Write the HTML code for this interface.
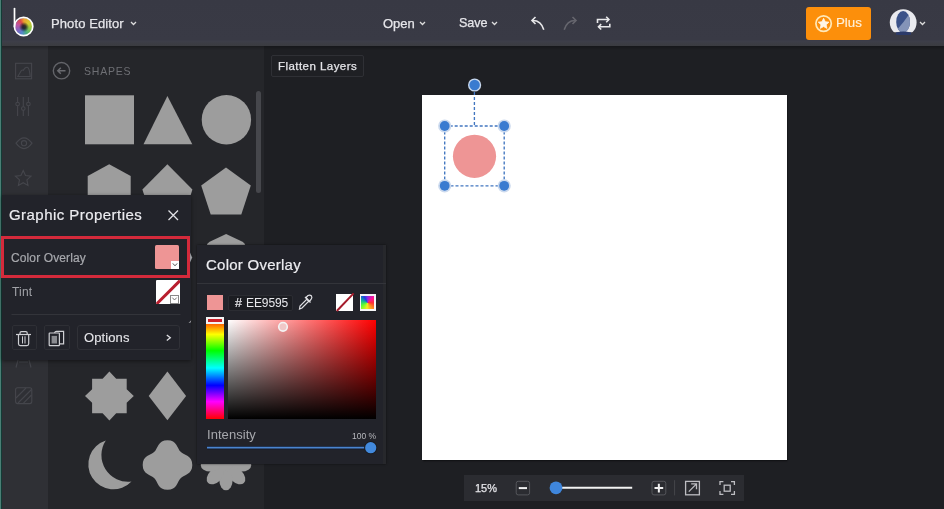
<!DOCTYPE html>
<html><head><meta charset="utf-8">
<style>
*{margin:0;padding:0;box-sizing:border-box}
html,body{width:944px;height:509px;overflow:hidden;background:#1e1f23;font-family:"Liberation Sans",sans-serif;position:relative}
.a{position:absolute}
svg{position:absolute;overflow:visible}
.t{position:absolute;white-space:nowrap;line-height:1;will-change:transform}
</style></head><body>
<!-- canvas area bg -->
<div class="a" style="left:264px;top:46px;width:680px;height:463px;background:#1e1f23"></div>
<!-- panel -->
<div class="a" style="left:47px;top:46px;width:217px;height:463px;background:#25262a"></div>
<!-- icon column -->
<div class="a" style="left:2px;top:46px;width:45.5px;height:463px;background:#2f3035"></div>
<!-- scrollbar -->
<div class="a" style="left:256px;top:91px;width:5px;height:102px;border-radius:3px;background:#46474c"></div>
<!-- sidebar header -->
<svg style="left:0;top:0" width="270" height="509">
  <g fill="none" stroke="#45464c" stroke-width="1.1">
    <rect x="15.6" y="63.3" width="16" height="15.5"/>
    <path d="M17.8 76.5 L21.2 70.8 Q22.3 69.5 23.3 70.3 Q25 67 27.3 67.2 Q29.5 67.8 30.2 76.5 Z"/>
    <path d="M17.6 97 V116 M23.3 97 V116 M28.4 97 V116"/>
    <circle cx="17.6" cy="104" r="1.8" fill="#2f3035"/>
    <circle cx="23.3" cy="108.6" r="1.8" fill="#2f3035"/>
    <circle cx="28.4" cy="104" r="1.8" fill="#2f3035"/>
    <path d="M16 143.2 Q24 132.5 32 143.2 Q24 154 16 143.2 Z"/>
    <circle cx="24" cy="143.2" r="2.6"/>
    <path d="M23.2 170.5 L25.5 175.6 L31 176.2 L26.9 179.9 L28 185.5 L23.2 182.7 L18.4 185.5 L19.5 179.9 L15.4 176.2 L20.9 175.6 Z"/>
    <path d="M16 367.5 L18 360 M31 367.5 L29 360 M19 362 H28"/>
    <rect x="15.6" y="387.8" width="16.2" height="15.8" rx="2"/>
    <path d="M16 398 L26 388 M18 403 L31.5 389.5 M23.5 403.2 L31.5 395"/>
  </g>
  <circle cx="61.5" cy="70.7" r="8.2" fill="none" stroke="#636469" stroke-width="1.4"/>
  <path d="M65.5 70.7 H57.8 M60.8 67.7 L57.8 70.7 L60.8 73.7" fill="none" stroke="#6a6b70" stroke-width="1.5"/>
  <g fill="#9d9d9d">
    <rect x="85" y="95.3" width="49" height="49"/>
    <path d="M167.4 96 L192.3 144.3 L143.5 144.3 Z"/>
    <circle cx="226.4" cy="119.7" r="24.7"/>
    <path d="M109.2 164.2 L130.7 176 V213 H87.7 V176 Z"/>
    <path d="M167.4 164.2 L192.4 189.4 L185 213 H150 L142.4 189.4 Z"/>
    <path d="M226 167.4 L250.8 185.4 L241.3 214.6 L210.7 214.6 L201.2 185.4 Z"/>
    <path d="M226.1 233.9 L242.5 241.8 Q245 243.2 245.5 246 L246 271 L226 284 L206 271 L206.5 246 Q207 243.2 209.7 241.8 Z"/>
    <path d="M109.4 371.6 L116.2 378.7 L126.7 378.7 L126.7 389.2 L133.8 396 L126.7 402.8 L126.7 413.3 L116.2 413.3 L109.4 420.4 L102.6 413.3 L92.1 413.3 L92.1 402.8 L85 396 L92.1 389.2 L92.1 378.7 L102.6 378.7 Z"/>
    <path d="M167.4 371.6 L186.1 396 L167.4 420.3 L148.7 396 Z"/>
    <path d="M105.8 440.5 A25 25 0 1 0 131.5 481.5 A26.6 26.6 0 0 1 105.8 440.5 Z"/>
    <path d="M167.50 440.20 C177.00 440.20 177.12 448.31 180.65 451.85 C184.19 455.38 192.30 455.50 192.30 465.00 C192.30 474.50 184.19 474.62 180.65 478.15 C177.12 481.69 177.00 489.80 167.50 489.80 C158.00 489.80 157.88 481.69 154.35 478.15 C150.81 474.62 142.70 474.50 142.70 465.00 C142.70 455.50 150.81 455.38 154.35 451.85 C157.88 448.31 158.00 440.20 167.50 440.20 Z"/>
    <circle cx="226" cy="465" r="16"/>
    <ellipse cx="241.50" cy="465.00" rx="9.8" ry="6.6" transform="rotate(0 241.50 465.00)"/>
    <ellipse cx="236.96" cy="475.96" rx="9.8" ry="6.6" transform="rotate(45 236.96 475.96)"/>
    <ellipse cx="226.00" cy="480.50" rx="9.8" ry="6.6" transform="rotate(90 226.00 480.50)"/>
    <ellipse cx="215.04" cy="475.96" rx="9.8" ry="6.6" transform="rotate(135 215.04 475.96)"/>
    <ellipse cx="210.50" cy="465.00" rx="9.8" ry="6.6" transform="rotate(180 210.50 465.00)"/>
    <ellipse cx="215.04" cy="454.04" rx="9.8" ry="6.6" transform="rotate(225 215.04 454.04)"/>
    <ellipse cx="226.00" cy="449.50" rx="9.8" ry="6.6" transform="rotate(270 226.00 449.50)"/>
    <ellipse cx="236.96" cy="454.04" rx="9.8" ry="6.6" transform="rotate(315 236.96 454.04)"/>
  </g>
</svg>
<div class="t" style="left:84.4px;top:65.5px;font-size:10.5px;color:#6e6f74;letter-spacing:0.8px">SHAPES</div>

<!-- Flatten layers -->
<div class="a" style="left:270.5px;top:54.5px;width:93.5px;height:22.5px;border:1px solid #2f3035;border-radius:2px;background:#1f2024"></div>
<div class="t" style="left:277.8px;top:61px;font-size:11.5px;color:#e4e4e8;letter-spacing:0.45px;-webkit-text-stroke:0.25px #e4e4e8">Flatten Layers</div>

<!-- canvas -->
<div class="a" style="left:422px;top:95px;width:365px;height:365px;background:#fff;box-shadow:0.5px 1px 1.5px rgba(0,0,0,0.6)"></div>
<svg style="left:0;top:0" width="944" height="509">
  <circle cx="474.5" cy="156.3" r="21.6" fill="#ee9595"/>
  <g fill="none" stroke="#4176c0" stroke-width="1.35" stroke-dasharray="3 2">
    <path d="M444.7 126 H504.2 V185.8 H444.7 Z"/>
    <path d="M474.4 92 V126"/>
  </g>
  <g fill="#3a7bd0">
    <circle cx="474.6" cy="85" r="6.6" fill="#c9d9ef"/>
    <circle cx="474.6" cy="85" r="5.2"/>
    <circle cx="444.7" cy="126" r="6.6" fill="#ccdaee"/>
    <circle cx="504.2" cy="126" r="6.6" fill="#ccdaee"/>
    <circle cx="444.7" cy="185.8" r="6.6" fill="#ccdaee"/>
    <circle cx="504.2" cy="185.8" r="6.6" fill="#ccdaee"/>
    <circle cx="444.7" cy="126" r="4.9"/>
    <circle cx="504.2" cy="126" r="4.9"/>
    <circle cx="444.7" cy="185.8" r="4.9"/>
    <circle cx="504.2" cy="185.8" r="4.9"/>
  </g>
</svg>

<!-- zoom bar -->
<div class="a" style="left:464px;top:475px;width:280px;height:26px;background:#2b2c31"></div>
<div class="t" style="left:474.5px;top:483px;font-size:11px;color:#e4e4e8;-webkit-text-stroke:0.25px #e4e4e8">15%</div>
<svg style="left:0;top:0" width="944" height="509">
  <rect x="516.2" y="481.3" width="13.4" height="13.6" rx="2" fill="none" stroke="#55565b" stroke-width="1"/>
  <path d="M518.8 488.1 H527" stroke="#f0f0f0" stroke-width="2"/>
  <path d="M556 487.8 H632.2" stroke="#f2f2f2" stroke-width="2"/>
  <circle cx="556" cy="487.8" r="6.4" fill="#3f86dc"/>
  <rect x="652" y="481.3" width="13.8" height="13.6" rx="2" fill="none" stroke="#55565b" stroke-width="1"/>
  <path d="M654.5 488.1 H663.2 M658.85 483.8 V492.4" stroke="#f0f0f0" stroke-width="2"/>
  <path d="M674.6 480.2 V495.4" stroke="#45464b" stroke-width="1"/>
  <rect x="685.6" y="481.4" width="13.8" height="13.4" fill="none" stroke="#bdbdc2" stroke-width="1.3"/>
  <path d="M688.8 491.6 L696.5 483.9 M691.2 483.9 H696.5 V489.2" fill="none" stroke="#bdbdc2" stroke-width="1.3"/>
  <path d="M720 485 V481.6 H723.4 M731 481.6 H734.4 V485 M734.4 491 V494.4 H731 M723.4 494.4 H720 V491" fill="none" stroke="#bdbdc2" stroke-width="1.3"/>
  <rect x="724.2" y="485.2" width="6" height="6" fill="none" stroke="#bdbdc2" stroke-width="1.3"/>
</svg>

<!-- header -->
<div class="a" style="left:0;top:46px;width:944px;height:4px;background:linear-gradient(to bottom,rgba(0,0,0,0.25),rgba(0,0,0,0))"></div>
<div class="a" style="left:0;top:0;width:944px;height:46px;background:linear-gradient(to bottom,#383944 0px,#393a45 40px,#3d3e49 41px,#3c3d45 43px,#3b3c40 46px)"></div>
<!-- teal strip -->
<div class="a" style="left:0;top:0;width:1px;height:509px;background:#4a7f75"></div>
<div class="a" style="left:1px;top:0;width:1px;height:509px;background:#123c36"></div>

<!-- logo -->
<div class="a" style="left:14.6px;top:17.5px;width:18px;height:18px;border-radius:50%;background:conic-gradient(from 0deg,#eca030,#d4cc30 50deg,#84c44c 110deg,#48ac84 160deg,#5484cc 200deg,#8464bc 245deg,#c054a0 290deg,#dc4848 330deg,#eca030)"></div>
<div class="a" style="left:14.6px;top:17.5px;width:18px;height:18px;border-radius:50%;background:radial-gradient(circle at 50% 50%,rgba(30,30,40,0.95) 0px,rgba(30,30,40,0.85) 1.8px,rgba(40,40,50,0) 5px)"></div>
<svg style="left:0;top:0" width="60" height="46">
  <path d="M14.5 8.5 V26.5" fill="none" stroke="#fff" stroke-width="1.7" stroke-linecap="round"/>
  <circle cx="23.6" cy="26.5" r="9.2" fill="none" stroke="#fff" stroke-width="1.7"/>
</svg>
<div class="t" style="left:50.5px;top:17px;font-size:13px;color:#e6e6ea;letter-spacing:0.1px;-webkit-text-stroke:0.25px #e6e6ea">Photo Editor</div>
<svg style="left:130px;top:20px" width="8" height="6"><path d="M1 2 L3.5 4.5 L6 2" fill="none" stroke="#ddd" stroke-width="1.3"/></svg>

<!-- Open / Save -->
<div class="t" style="left:383px;top:17px;font-size:13px;color:#e6e6ea;-webkit-text-stroke:0.25px #e6e6ea">Open</div>
<svg style="left:419px;top:20px" width="8" height="6"><path d="M1 2 L3.5 4.5 L6 2" fill="none" stroke="#ddd" stroke-width="1.3"/></svg>
<div class="t" style="left:459px;top:17px;font-size:12.6px;color:#e6e6ea;letter-spacing:-0.1px;-webkit-text-stroke:0.25px #e6e6ea;top:17.3px">Save</div>
<svg style="left:491px;top:20px" width="8" height="6"><path d="M1 2 L3.5 4.5 L6 2" fill="none" stroke="#ddd" stroke-width="1.3"/></svg>

<!-- undo redo swap -->
<svg style="left:528px;top:14px" width="20" height="20">
  <path d="M4 6.5 Q13 6 15.8 15.8" fill="none" stroke="#e8e8ea" stroke-width="1.6"/>
  <path d="M7.5 3 L4 6.5 L7.5 10" fill="none" stroke="#e8e8ea" stroke-width="1.6"/>
</svg>
<svg style="left:560px;top:14px" width="20" height="20">
  <path d="M16 6.5 Q7 6 4.2 15.8" fill="none" stroke="#66666e" stroke-width="1.6"/>
  <path d="M12.5 3 L16 6.5 L12.5 10" fill="none" stroke="#66666e" stroke-width="1.6"/>
</svg>
<svg style="left:594px;top:14px" width="20" height="20">
  <path d="M3.5 9 V5.5 H15" fill="none" stroke="#e8e8ea" stroke-width="1.6"/>
  <path d="M12.2 2.8 L14.9 5.5 L12.2 8.2" fill="none" stroke="#e8e8ea" stroke-width="1.6"/>
  <path d="M15.8 9.8 V12.8 H4.5" fill="none" stroke="#e8e8ea" stroke-width="1.6"/>
  <path d="M7.2 10.1 L4.5 12.8 L7.2 15.5" fill="none" stroke="#e8e8ea" stroke-width="1.6"/>
</svg>

<!-- Plus button -->
<div class="a" style="left:806px;top:6.5px;width:65px;height:33px;background:#fc8f0b;border-radius:3px"></div>
<svg style="left:815px;top:15px" width="18" height="18">
  <circle cx="8.6" cy="8.6" r="7.7" fill="none" stroke="#ffe8b8" stroke-width="1.7"/>
  <path d="M8.6 3.3 L10.25 6.75 L13.95 7.15 L11.2 9.7 L11.95 13.4 L8.6 11.55 L5.25 13.4 L6 9.7 L3.25 7.15 L6.95 6.75 Z" fill="#fff5e6" stroke="#fff5e6" stroke-width="0.8" stroke-linejoin="round"/>
</svg>
<div class="t" style="left:836px;top:15.5px;font-size:13.3px;color:#fff0d8;-webkit-text-stroke:0.15px #fff0d8">Plus</div>

<!-- avatar -->
<svg style="left:886px;top:6px" width="36" height="34">
  <defs><clipPath id="avc"><rect x="0" y="0" width="36" height="26.3"/></clipPath>
  <clipPath id="hd"><ellipse cx="17.1" cy="15.9" rx="6.9" ry="10.8"/></clipPath></defs>
  <circle cx="17.2" cy="16.6" r="13.4" fill="#e9eaef" clip-path="url(#avc)"/>
  <ellipse cx="17.1" cy="15.9" rx="6.9" ry="10.8" fill="#3b5289"/>
  <path d="M24 7 L24 28 L10 28 L10 25 Q18 16 24 7 Z" fill="#8494b8" clip-path="url(#hd)"/>
  <path d="M10 26.5 Q17 24.5 25 26.5 L25 28.8 Q17 29.3 10 28.8 Z" fill="#2b3a6a"/>
</svg>
<svg style="left:919px;top:20px" width="8" height="6"><path d="M1 2 L3.5 4.5 L6 2" fill="none" stroke="#ddd" stroke-width="1.3"/></svg>

<!-- Graphic properties popup -->
<div class="a" style="left:2px;top:195px;width:189px;height:165px;background:#22232a;box-shadow:0 1px 4px rgba(0,0,0,0.5)"></div>
<div class="t" style="left:9px;top:206.5px;font-size:15px;color:#ececf0;letter-spacing:0.45px;-webkit-text-stroke:0.2px #ececf0">Graphic Properties</div>
<svg style="left:0;top:0" width="400" height="509">
  <path d="M168.5 210.5 L178 220 M178 210.5 L168.5 220" stroke="#e0e0e4" stroke-width="1.3"/>
</svg>
<div class="a" style="left:1px;top:236px;width:189px;height:42px;border:3.8px solid #d42a3b"></div>
<div class="t" style="left:10.6px;top:252px;font-size:12px;color:#a7a8ad;letter-spacing:0.12px;-webkit-text-stroke:0.2px #a7a8ad">Color Overlay</div>
<div class="a" style="left:155px;top:244.7px;width:24.2px;height:24.2px;background:#ee9595;border-radius:1.5px"></div>
<div class="a" style="left:170.8px;top:260.7px;width:8.4px;height:8.2px;background:#fff"></div>
<svg style="left:0;top:0" width="400" height="509">
  <path d="M172.8 263.4 L175 265.8 L177.2 263.4" fill="none" stroke="#555" stroke-width="1"/>
  <path d="M190 252.5 L192.2 257.5 L190 262.5 Z" fill="#9a9ba0"/>
  <path d="M188.6 323 L191.2 320.3 L190.6 322.6 Z" fill="#b0b0b4"/>
</svg>
<div class="t" style="left:11.5px;top:286px;font-size:12px;color:#a2a3a8;letter-spacing:0.2px">Tint</div>
<div class="a" style="left:156px;top:280px;width:23.5px;height:23.5px;background:#fff;border-radius:1px;overflow:hidden">
  <div class="a" style="left:-6px;top:10.5px;width:36px;height:2.6px;background:#b81e2e;transform:rotate(-45deg)"></div>
</div>
<div class="a" style="left:170px;top:295px;width:9px;height:8.5px;background:#fff;border:1px solid #888"></div>
<svg style="left:0;top:0" width="400" height="509">
  <path d="M172.3 297.6 L174.5 300 L176.7 297.6" fill="none" stroke="#666" stroke-width="0.9"/>
  <path d="M11.5 314.5 H180.5" stroke="#33343a" stroke-width="1"/>
</svg>
<div class="a" style="left:11.5px;top:325px;width:25.5px;height:25px;border:1px solid #2e2f35;border-radius:2px"></div>
<div class="a" style="left:43.5px;top:325px;width:26px;height:25px;border:1px solid #2e2f35;border-radius:2px"></div>
<div class="a" style="left:77px;top:325px;width:103px;height:25px;border:1px solid #303137;border-radius:3px"></div>
<svg style="left:0;top:0" width="400" height="509">
  <g fill="none" stroke="#cfd0d4" stroke-width="1.2">
    <path d="M16 334.5 H31"/>
    <path d="M20 334.3 V333 Q20 331.6 21.4 331.6 H25.8 Q27.2 331.6 27.2 333 V334.3"/>
    <path d="M18.5 334.5 V343.8 Q18.5 345.6 20.3 345.6 H26.9 Q28.7 345.6 28.7 343.8 V334.5"/>
    <path d="M22.5 336.3 V343.5 M25 336.3 V343.5" stroke-width="1"/>
    <path d="M54.5 332.9 Q55 331.3 56.5 331.3 H63.6 V343.9 H59.6"/>
    <rect x="49.2" y="333" width="10.2" height="12.6" rx="0.6"/>
  </g>
  <rect x="51.6" y="335.9" width="5.4" height="7.6" fill="#8a8b90"/>
  <path d="M166.8 335 L170.3 337.8 L166.8 340.6" fill="none" stroke="#e0e0e4" stroke-width="1.3"/>
</svg>
<div class="t" style="left:83.8px;top:331px;font-size:13px;color:#e6e6ea;letter-spacing:0.1px;-webkit-text-stroke:0.1px #e6e6ea">Options</div>

<!-- Color overlay popup -->
<div class="a" style="left:197px;top:245px;width:189px;height:219px;background:#22232a;box-shadow:0 0 2px rgba(0,0,0,0.6)"></div>
<div class="a" style="left:382.6px;top:245px;width:3.4px;height:219px;background:#27282c"></div>
<div class="t" style="left:205.8px;top:256.5px;font-size:15px;color:#ececf0;letter-spacing:0.25px;-webkit-text-stroke:0.2px #ececf0">Color Overlay</div>
<div class="a" style="left:197px;top:283px;width:189px;height:1px;background:#33343a"></div>
<div class="a" style="left:207px;top:294.5px;width:16px;height:15.5px;background:#ee9595"></div>
<div class="a" style="left:228.3px;top:294.5px;width:64.5px;height:16px;background:#1c1d22;border:1px solid #2b2c32;border-radius:2px"></div>
<div class="t" style="left:234.5px;top:296.5px;font-size:12.5px;color:#e8e8ec;-webkit-text-stroke:0.2px #e8e8ec">#</div><div class="t" style="left:246px;top:297px;font-size:12px;color:#e8e8ec;letter-spacing:-0.1px">EE9595</div>
<svg style="left:0;top:0" width="944" height="509">
  <g fill="none" stroke="#e0e0e4" stroke-width="1.2">
    <path d="M299.5 309 L300 306 L307 299 L309 301 L302 308 Z"/>
    <path d="M306 297.5 L308 295.5 Q310 294.5 311.5 296 Q312.5 297.5 311 299.5 L309 301.5 Z"/>
    <path d="M305 297 L310.5 302.5"/>
  </g>
</svg>
<div class="a" style="left:336px;top:293.8px;width:17px;height:17px;background:#fff"></div>
<svg style="left:0;top:0" width="944" height="509">
  <path d="M336.8 311 L353.6 293.4" stroke="#a51b2b" stroke-width="2"/>
</svg>
<div class="a" style="left:359.7px;top:293.8px;width:16.3px;height:17px;background:#f6f6f8;padding:1.8px">
  <div style="width:100%;height:100%;background:conic-gradient(from 0deg,#8a2be2,#ff1493 50deg,#ff3030 95deg,#ff9020 140deg,#f0f020 185deg,#60ff30 240deg,#10b0a0 290deg,#2040e0 330deg,#8a2be2)"></div>
</div>
<div class="a" style="left:205.8px;top:317px;width:18.2px;height:101.5px;background:linear-gradient(to bottom,#ff0000 0%,#ffff00 17%,#00ff00 33%,#00ffff 50%,#0000ff 67%,#ff00ff 83%,#ff0000 100%)"></div>
<div class="a" style="left:205.8px;top:317px;width:18.2px;height:7.2px;border:2px solid #f4f4f4;background:#d0202a"></div>
<div class="a" style="left:228px;top:319.5px;width:148px;height:99px;background:linear-gradient(to top,#000,rgba(0,0,0,0)),linear-gradient(to right,#fff,#ff0000)"></div>
<svg style="left:0;top:0" width="944" height="509">
  <circle cx="283" cy="326.8" r="4.3" fill="#f0c8c8" stroke="#f4f4f4" stroke-width="1.6"/>
</svg>
<div class="t" style="left:207px;top:428px;font-size:13px;color:#a7a8ad;letter-spacing:0.05px">Intensity</div>
<div class="t" style="left:352.4px;top:432px;font-size:8.5px;color:#b8b9be">100 %</div>
<svg style="left:0;top:0" width="944" height="509">
  <path d="M207 447.7 H370" stroke="#151a28" stroke-width="3.4"/>
  <path d="M207 447.7 H370" stroke="#4a84cf" stroke-width="1.8"/>
  <circle cx="370.7" cy="447.7" r="6.6" fill="#1a1b1f"/>
  <circle cx="370.7" cy="447.7" r="5.6" fill="#4289dc"/>
</svg>
</body></html>
